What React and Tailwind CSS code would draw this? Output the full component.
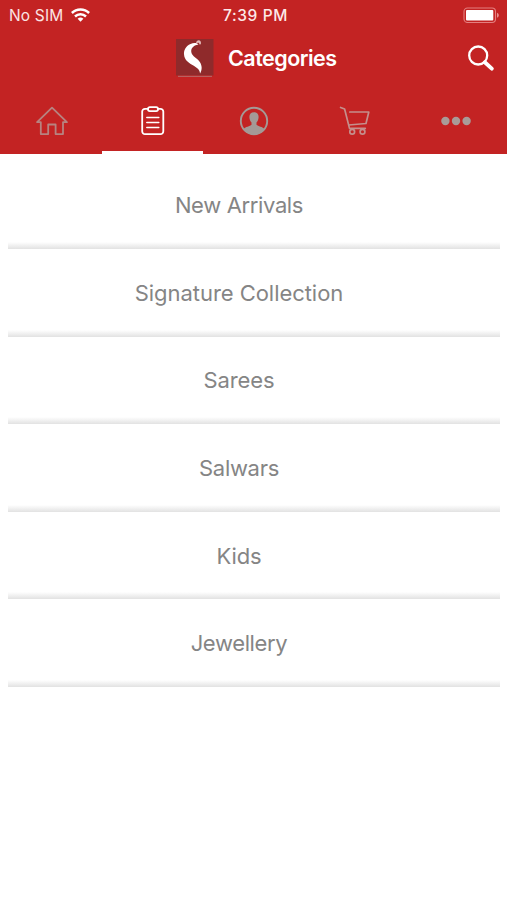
const CATEGORIES = [
  { name: 'New Arrivals', spacing: 'tracking-[-0.36px]' },
  { name: 'Signature Collection', spacing: 'tracking-[-0.05px]' },
  { name: 'Sarees', spacing: 'tracking-[-0.1px]' },
  { name: 'Salwars', spacing: 'tracking-[-0.3px]' },
  { name: 'Kids', spacing: 'tracking-[-0.1px]' },
  { name: 'Jewellery', spacing: 'tracking-[-0.35px]' },
]

function WifiIcon() {
  return (
    <svg width="19" height="14" viewBox="0 0 19 14" fill="none" stroke="#fff" strokeWidth="2.5">
      <path d="M.9 5a12.2 12.2 0 0 1 17.200 0" />
      <path d="M4 8.500a8 8 0 0 1 11 0" />
      <path d="M9.500 13.700 6.600 10.800a4.200 4.200 0 0 1 5.800 0z" fill="#fff" stroke="none" />
    </svg>
  )
}

function BatteryIcon() {
  return (
    <svg width="37" height="17" viewBox="0 0 37 17">
      <rect x="1" y="1" width="31.5" height="14.5" rx="3.5" fill="none" stroke="#e47f7f" strokeWidth="1.1" />
      <rect x="3" y="3" width="27.3" height="10.5" rx="1" fill="#fff" />
      <path d="M34 5.8c2.4.8 2.4 4.2 0 5z" fill="#e88f8f" />
    </svg>
  )
}

function Logo() {
  return (
    <svg width="38" height="40" viewBox="0 0 38 40">
      <rect width="37.5" height="36.5" fill="#8f2a2b" />
      <rect x="2" y="36.8" width="34" height="1.2" fill="#b9605f" />
      <path
        d="M22.4 5.6C20.800 3.800 17.500 3.700 14.500 5C10 7 7.800 11 8 15.200c.4 6.200 5.100 8.800 9.800 11.600 3.600 2.200 6 4.200 6.300 7.600 2.300-3.800 2-8.100-.3-11.500-2.800-4-7.500-5.200-8.400-9.300-.8-3.800 1.600-7.200 7-8z"
        fill="#fff"
      />
      <path d="M20 4.200c.2-1.700 1.500-3 3-2.900 1.600.2 2.300 2 1.800 3.900l-1.300.3c-.1-1.200-.9-1.900-2-1.600z" fill="#e5bcbb" />
    </svg>
  )
}

function SearchIcon() {
  return (
    <svg width="28" height="28" viewBox="0 0 28 28" fill="none" stroke="#fff">
      <circle cx="11.2" cy="10.500" r="9" strokeWidth="2.300" />
      <path d="m17.800 17.200 7 6.400" strokeWidth="3.900" strokeLinecap="round" />
    </svg>
  )
}

function HomeIcon() {
  return (
    <svg width="32" height="30" viewBox="0 0 32 30" fill="none" stroke="#b78380" strokeWidth="1.8" strokeLinejoin="round">
      <path d="M16 1.600 1.100 16.200h3.700v11.900h7.400v-9.600h7.400v9.600h7.400V16.200h3.900z" />
    </svg>
  )
}

function ListIcon() {
  return (
    <svg width="24" height="30" viewBox="0 0 24 30" fill="none" stroke="#fff" strokeWidth="1.8" strokeLinecap="round">
      <path d="M7.3 2.800H4a2.800 2.800 0 0 0-2.800 2.800v19.700a2.800 2.800 0 0 0 2.800 2.800h15.500a2.800 2.800 0 0 0 2.800-2.800V5.600a2.800 2.800 0 0 0-2.800-2.800h-2.800" />
      <rect x="7" y="1.100" width="10" height="4" rx="1.800" />
      <path d="M5.800 11.500h12M5.800 16.500h12M5.800 21.500h12" strokeWidth="1.500" />
    </svg>
  )
}

function ProfileIcon() {
  return (
    <svg width="30" height="30" viewBox="0 0 30 30">
      <circle cx="15" cy="15" r="13.200" fill="none" stroke="#a49996" strokeWidth="1.900" />
      <path
        d="M15 6.300c-3.200 0-4.800 2.100-4.600 5 .1 2.200.9 4.100 2.100 5.200v2.200c-1.500 1.900-6.200 1.700-8.400 4.600A13.800 13.800 0 0 0 15 28.600a13.800 13.800 0 0 0 10.900-5.300c-2.200-2.900-6.900-2.700-8.400-4.600v-2.200c1.200-1.100 2-3 2.100-5.200.2-2.900-1.400-5-4.600-5z"
        fill="#a49996"
      />
    </svg>
  )
}

function CartIcon() {
  return (
    <svg width="32" height="30" viewBox="0 0 32 30" fill="none" stroke="#c58f8c" strokeWidth="1.700" strokeLinecap="round" strokeLinejoin="round">
      <path d="M1.600 1.500 5.600 3 10.500 22.400h15.800M10.800 6h19l-2.800 11.500-17.200 1.500" />
      <circle cx="13.200" cy="25.700" r="2.400" />
      <circle cx="23.500" cy="25.700" r="2.400" />
    </svg>
  )
}

function MoreIcon() {
  return (
    <svg width="30" height="10" viewBox="0 0 30 10" fill="#a99b98">
      <circle cx="4.400" cy="5" r="4.200" />
      <circle cx="15" cy="5" r="4.200" />
      <circle cx="25.600" cy="5" r="4.200" />
    </svg>
  )
}

const TABS = [
  { name: 'home', Icon: HomeIcon },
  { name: 'categories', Icon: ListIcon, active: true },
  { name: 'profile', Icon: ProfileIcon },
  { name: 'cart', Icon: CartIcon },
  { name: 'more', Icon: MoreIcon },
]

export default function App() {
  return (
    <div className="h-[900px] w-[507px] overflow-hidden bg-white font-['Inter','Liberation_Sans',sans-serif]">
      <header className="flex h-[154px] flex-col bg-[#c32323] text-white">
        <div className="grid h-[30px] grid-cols-[1fr_auto_1fr] items-center pl-[9px] pr-[7px] leading-none">
          <div className="flex items-center gap-[8px] text-[#fbe3e3]">
            <span className="pt-px text-[15.5px] tracking-[0.15px]">No SIM</span>
            <WifiIcon />
          </div>
          <span className="pl-[2px] pt-px text-[15.5px] font-medium tracking-[0.6px] text-[#fde9e9]">7:39 PM</span>
          <div className="flex justify-end">
            <BatteryIcon />
          </div>
        </div>

        <div className="flex h-[58px] items-center pl-[176px] pr-[12px]">
          <Logo />
          <h1 className="ml-[14px] pb-[2px] text-[21.5px] font-semibold tracking-[-0.52px]">Categories</h1>
          <button aria-label="Search" className="ml-auto">
            <SearchIcon />
          </button>
        </div>

        <nav className="grid flex-1 grid-cols-5 pl-px">
          {TABS.map(({ name, Icon, active }) => (
            <button
              key={name}
              aria-label={name}
              className={`flex items-center justify-center border-b-[3px] pt-[2px] ${active ? 'border-white' : 'border-transparent'}`}
            >
              <Icon />
            </button>
          ))}
        </nav>
      </header>

      <ul className="pl-[8px] pr-[7px] pt-[7.4px]">
        {CATEGORIES.map(({ name, spacing }) => (
          <li key={name} className="flex h-[87.6px] flex-col">
            <div className={`flex flex-1 items-center justify-center pr-[30px] pt-[8px] text-[22px] text-[#858585] ${spacing}`}>{name}</div>
            <div className="h-[7px] bg-linear-to-b from-white to-[#e2e2e2]" />
          </li>
        ))}
      </ul>
    </div>
  )
}
